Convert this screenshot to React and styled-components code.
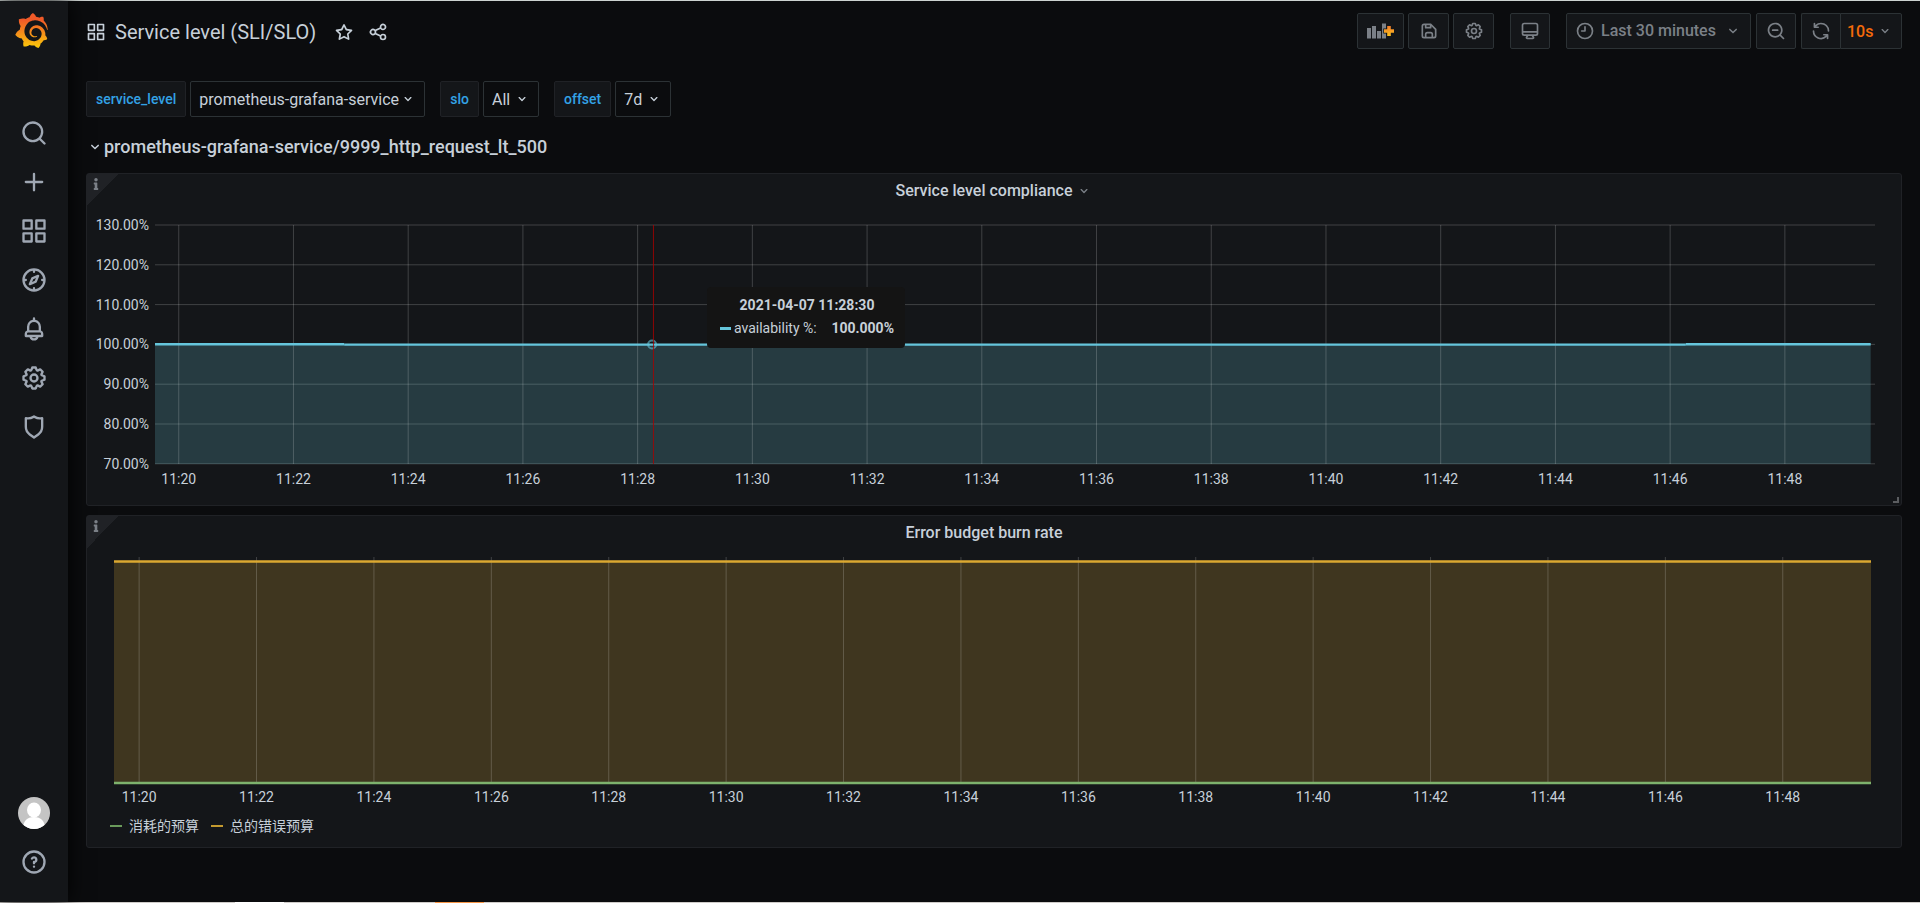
import React from 'react';
import styled, { createGlobalStyle, ThemeProvider } from 'styled-components';
import { SiGrafana } from 'react-icons/si';
import { FaInfo } from 'react-icons/fa';

const theme = {
  bg: '#0b0c0e',
  panel: '#141619',
  border: '#202226',
  controlBorder: '#2c3235',
  text: '#c7d0d9',
  textWeak: '#9fa7b3',
  icon: '#7b8087',
  blue: '#33a2e5',
  orange: '#f46a0a',
};

const GlobalStyle = createGlobalStyle`
  *, *::before, *::after {
    box-sizing: border-box;
  }
  body {
    margin: 0;
    background: ${theme.bg};
    color: ${theme.text};
    font-family: Roboto, 'Noto Sans CJK SC', sans-serif;
    font-size: 14px;
  }
  button, select {
    font: inherit;
    color: inherit;
    margin: 0;
  }
`;

const icons = {
  search:
    'M21.71,20.29,18,16.61A9,9,0,1,0,16.61,18l3.68,3.68a1,1,0,0,0,1.42,0A1,1,0,0,0,21.71,20.29ZM11,18a7,7,0,1,1,7-7A7,7,0,0,1,11,18Z',
  zoomOut:
    'M21.71,20.29,18,16.61A9,9,0,1,0,16.61,18l3.68,3.68a1,1,0,0,0,1.42,0A1,1,0,0,0,21.71,20.29ZM11,18a7,7,0,1,1,7-7A7,7,0,0,1,11,18ZM14,10H8a1,1,0,0,0,0,2h6a1,1,0,0,0,0-2Z',
  plus: 'M19,11H13V5a1,1,0,0,0-2,0v6H5a1,1,0,0,0,0,2h6v6a1,1,0,0,0,2,0V13h6a1,1,0,0,0,0-2Z',
  apps:
    'M10,13H3a1,1,0,0,0-1,1v7a1,1,0,0,0,1,1h7a1,1,0,0,0,1-1V14A1,1,0,0,0,10,13ZM9,20H4V15H9ZM21,2H14a1,1,0,0,0-1,1v7a1,1,0,0,0,1,1h7a1,1,0,0,0,1-1V3A1,1,0,0,0,21,2ZM20,9H15V4h5Zm1,4H14a1,1,0,0,0-1,1v7a1,1,0,0,0,1,1h7a1,1,0,0,0,1-1V14A1,1,0,0,0,21,13Zm-1,7H15V15h5ZM10,2H3A1,1,0,0,0,2,3v7a1,1,0,0,0,1,1h7a1,1,0,0,0,1-1V3A1,1,0,0,0,10,2ZM9,9H4V4H9Z',
  compass:
    'M12,2A10,10,0,1,0,22,12,10,10,0,0,0,12,2Zm1,17.93V19a1,1,0,0,0-2,0v.93A8,8,0,0,1,4.07,13H5a1,1,0,0,0,0-2H4.07A8,8,0,0,1,11,4.07V5a1,1,0,0,0,2,0V4.07A8,8,0,0,1,19.93,11H19a1,1,0,0,0,0,2h.93A8,8,0,0,1,13,19.93ZM15.14,7.55l-5,2.12a1,1,0,0,0-.52.52l-2.12,5a1,1,0,0,0,.21,1.1,1,1,0,0,0,.7.3.93.93,0,0,0,.4-.09l5-2.12a1,1,0,0,0,.52-.52l2.12-5a1,1,0,0,0-1.31-1.31Zm-2.49,5.1-2.28,1,1-2.28,2.28-1Z',
  bell:
    'M18,13.18V10a6,6,0,0,0-5-5.91V3a1,1,0,0,0-2,0V4.09A6,6,0,0,0,6,10v3.18A3,3,0,0,0,4,16v2a1,1,0,0,0,1,1H8.14a4,4,0,0,0,7.72,0H19a1,1,0,0,0,1-1V16A3,3,0,0,0,18,13.18ZM8,10a4,4,0,0,1,8,0v3H8Zm4,10a2,2,0,0,1-1.72-1h3.44A2,2,0,0,1,12,20Zm6-3H6V16a1,1,0,0,1,1-1H17a1,1,0,0,1,1,1Z',
  cog:
    'M21.32,9.55l-1.89-.63.89-1.78A1,1,0,0,0,20.13,6L18,3.87a1,1,0,0,0-1.15-.19l-1.78.89-.63-1.89A1,1,0,0,0,13.5,2h-3a1,1,0,0,0-.95.68L8.92,4.57,7.14,3.68A1,1,0,0,0,6,3.87L3.87,6a1,1,0,0,0-.19,1.15l.89,1.78-1.89.63A1,1,0,0,0,2,10.5v3a1,1,0,0,0,.68.95l1.89.63-.89,1.78A1,1,0,0,0,3.87,18L6,20.13a1,1,0,0,0,1.15.19l1.78-.89.63,1.89a1,1,0,0,0,.95.68h3a1,1,0,0,0,.95-.68l.63-1.89,1.78.89A1,1,0,0,0,18,20.13L20.13,18a1,1,0,0,0,.19-1.15l-.89-1.78,1.89-.63A1,1,0,0,0,22,13.5v-3A1,1,0,0,0,21.32,9.55ZM20,12.78l-1.2.4A2,2,0,0,0,17.64,16l.57,1.14-1.1,1.1L16,17.64a2,2,0,0,0-2.79,1.16l-.4,1.2H11.22l-.4-1.2A2,2,0,0,0,8,17.64l-1.14.57-1.1-1.1L6.36,16A2,2,0,0,0,5.2,13.18L4,12.78V11.22l1.2-.4A2,2,0,0,0,6.36,8L5.79,6.89l1.1-1.1L8,6.36A2,2,0,0,0,10.82,5.2l.4-1.2h1.56l.4,1.2A2,2,0,0,0,16,6.36l1.14-.57,1.1,1.1L17.64,8a2,2,0,0,0,1.16,2.79l1.2.4ZM12,8a4,4,0,1,0,4,4A4,4,0,0,0,12,8Zm0,6a2,2,0,1,1,2-2A2,2,0,0,1,12,14Z',
  shield:
    'M19.63,3.65a1,1,0,0,0-.84-.2,8,8,0,0,1-6.22-1.27,1,1,0,0,0-1.14,0A8,8,0,0,1,5.21,3.45a1,1,0,0,0-.84.2A1,1,0,0,0,4,4.43v7.45a9,9,0,0,0,3.77,7.33l3.65,2.6a1,1,0,0,0,1.16,0l3.65-2.6A9,9,0,0,0,20,11.88V4.43A1,1,0,0,0,19.63,3.65ZM18,11.88a7,7,0,0,1-2.93,5.7L12,19.77,8.93,17.58A7,7,0,0,1,6,11.88V5.58a10,10,0,0,0,6-1.39,10,10,0,0,0,6,1.39Z',
  help:
    'M11.29,15.29a1.58,1.58,0,0,0-.12.15.76.76,0,0,0-.09.18.64.64,0,0,0-.06.18,1.36,1.36,0,0,0,0,.2.84.84,0,0,0,.08.38.9.9,0,0,0,.54.54.94.94,0,0,0,.76,0,.9.9,0,0,0,.54-.54A1,1,0,0,0,13,16a1,1,0,0,0-.29-.71A1,1,0,0,0,11.29,15.29ZM12,2A10,10,0,1,0,22,12,10,10,0,0,0,12,2Zm0,18a8,8,0,1,1,8-8A8,8,0,0,1,12,20ZM12,7A3,3,0,0,0,9.4,8.5a1,1,0,1,0,1.73,1A1,1,0,0,1,12,9a1,1,0,0,1,0,2,1,1,0,0,0-1,1v1a1,1,0,0,0,2,0v-.18A3,3,0,0,0,12,7Z',
  star:
    'M22,9.67A1,1,0,0,0,21.14,9l-5.69-.83L12.9,3a1,1,0,0,0-1.8,0L8.55,8.16,2.86,9a1,1,0,0,0-.81.68,1,1,0,0,0,.25,1l4.13,4-1,5.68A1,1,0,0,0,6.9,21.44L12,18.77l5.1,2.67a.93.93,0,0,0,.46.12,1,1,0,0,0,.59-.19,1,1,0,0,0,.4-1l-1-5.68,4.13-4A1,1,0,0,0,22,9.67Zm-6.15,4a1,1,0,0,0-.29.88l.72,4.2-3.76-2a1.06,1.06,0,0,0-.94,0l-3.76,2,.72-4.2a1,1,0,0,0-.29-.88l-3-3,4.21-.61a1,1,0,0,0,.76-.55L12,5.7l1.88,3.82a1,1,0,0,0,.76.55l4.21.61Z',
  share:
    'M18,14a4,4,0,0,0-3.08,1.48l-5.1-2.35a3.64,3.64,0,0,0,0-2.26l5.1-2.35A4,4,0,1,0,14,6a4.17,4.17,0,0,0,.07.71L8.79,9.14a4,4,0,1,0,0,5.72l5.28,2.43A4.17,4.17,0,0,0,14,18a4,4,0,1,0,4-4ZM18,4a2,2,0,1,1-2,2A2,2,0,0,1,18,4ZM6,14a2,2,0,1,1,2-2A2,2,0,0,1,6,14Zm12,6a2,2,0,1,1,2-2A2,2,0,0,1,18,20Z',
  save:
    'M20.71,9.29l-6-6a1,1,0,0,0-.32-.21A1.09,1.09,0,0,0,14,3H6A3,3,0,0,0,3,6V18a3,3,0,0,0,3,3H18a3,3,0,0,0,3-3V10A1,1,0,0,0,20.71,9.29ZM9,5h4V7H9Zm6,14H9V16a1,1,0,0,1,1-1h4a1,1,0,0,1,1,1Zm4-1a1,1,0,0,1-1,1H17V16a3,3,0,0,0-3-3H10a3,3,0,0,0-3,3v3H6a1,1,0,0,1-1-1V6A1,1,0,0,1,6,5H7V8A1,1,0,0,0,8,9h6a1,1,0,0,0,1-1V6.41l4,4Z',
  monitor:
    'M19,2H5A3,3,0,0,0,2,5V15a3,3,0,0,0,3,3H7.64l-.58,1a2,2,0,0,0,0,2,2,2,0,0,0,1.75,1h6.46A2,2,0,0,0,17,21a2,2,0,0,0,0-2l-.59-1H19a3,3,0,0,0,3-3V5A3,3,0,0,0,19,2ZM8.77,20,10,18H14l1.2,2ZM20,15a1,1,0,0,1-1,1H5a1,1,0,0,1-1-1V14H20Zm0-3H4V5A1,1,0,0,1,5,4H19a1,1,0,0,1,1,1Z',
  clock:
    'M12,2A10,10,0,1,0,22,12,10,10,0,0,0,12,2Zm0,18a8,8,0,1,1,8-8A8,8,0,0,1,12,20ZM12,6a1,1,0,0,0-1,1v4H8a1,1,0,0,0,0,2h4a1,1,0,0,0,1-1V7A1,1,0,0,0,12,6Z',
  sync:
    'M19.91,15.51H15.38a1,1,0,0,0,0,2h2.4A8,8,0,0,1,4,12a1,1,0,1,0-2,0,10,10,0,0,0,16.88,7.23V21a1,1,0,0,0,2,0V16.5A1,1,0,0,0,19.91,15.51ZM12,2A10,10,0,0,0,5.12,4.77V3a1,1,0,0,0-2,0V7.5a1,1,0,0,0,1,1h4.5a1,1,0,0,0,0-2H6.22A8,8,0,0,1,20,12a1,1,0,0,0,2,0A10,10,0,0,0,12,2Z',
  angleDown:
    'M17,9.17a1,1,0,0,0-1.41,0L12,12.71,8.46,9.17a1,1,0,0,0-1.41,0,1,1,0,0,0,0,1.42l4.24,4.24a1,1,0,0,0,1.42,0L17,10.59A1,1,0,0,0,17,9.17Z',
};

const Svg = styled.svg`
  display: block;
  flex: none;
  fill: currentColor;
`;

const Icon = ({ name, size = 20, ...rest }) => (
  <Svg viewBox="0 0 24 24" width={size} height={size} aria-hidden="true" {...rest}>
    <path d={icons[name]} />
  </Svg>
);

const Page = styled.div`
  display: flex;
  min-height: calc(100vh - 1px);
  border-top: 1px solid #cdd3d1;
`;

const BottomStrip = styled.div`
  height: 1px;
  background: linear-gradient(
    90deg,
    #cfccc9 235px,
    #fff 235px 284px,
    #cfccc9 284px 435px,
    #f79646 435px 484px,
    #cfccc9 484px
  );
`;

const Sidebar = styled.nav`
  display: flex;
  flex-direction: column;
  align-items: center;
  flex: none;
  width: 68px;
  padding: 12px 0 16px;
  background: ${({ theme }) => theme.panel};
  box-shadow: 0 0 20px #000;
  color: ${({ theme }) => theme.textWeak};
`;

const LogoLink = styled.a`
  display: flex;
  margin: 0 5px 60px 0;
  svg {
    fill: url(#logo-gradient);
  }
`;

const SideLink = styled.a`
  display: flex;
  align-items: center;
  justify-content: center;
  width: 68px;
  height: 49px;
  color: inherit;
`;

const SideBottom = styled.div`
  margin-top: auto;
`;

const Main = styled.main`
  flex: 1;
  min-width: 0;
  padding: 0 18px 54px;
`;

const Toolbar = styled.header`
  display: flex;
  align-items: center;
  justify-content: space-between;
  padding: 12px 0;
`;

const TitleGroup = styled.div`
  display: flex;
  align-items: center;
  padding-top: 2px;
`;

const PageTitle = styled.h1`
  margin: 0 18px 0 9px;
  font-size: 20px;
  font-weight: 400;
  line-height: 24px;
`;

const IconButton = styled.button`
  display: flex;
  padding: 0;
  margin-right: 14px;
  border: 0;
  background: none;
`;

const Actions = styled.div`
  display: flex;
  gap: ${({ $gap }) => $gap || 4}px;
  color: ${({ theme }) => theme.icon};
`;

const ToolButton = styled.button`
  display: flex;
  align-items: center;
  justify-content: center;
  width: ${({ $width }) => $width}px;
  height: 36px;
  padding: 0 8px;
  border: 1px solid ${({ theme }) => theme.controlBorder};
  border-radius: 2px;
  background: ${({ theme }) => theme.panel};
  font-size: 16px;
  font-weight: 500;
`;

const TimeLabel = styled.span`
  flex: 1;
  padding: 0 0 2px 6px;
  text-align: left;
  white-space: nowrap;
`;

const ButtonPair = styled.div`
  display: flex;
  & > button {
    border-right: 0;
    border-radius: 2px 0 0 2px;
  }
`;

const SelectBox = styled.div`
  display: flex;
  position: relative;
  align-items: center;
`;

const Select = styled.select`
  appearance: none;
  width: ${({ $width }) => $width}px;
  height: 36px;
  padding: 0 ${({ $joined }) => ($joined ? 6 : 8)}px;
  border: 1px solid ${({ theme }) => theme.controlBorder};
  border-radius: ${({ $joined }) => ($joined ? '0 2px 2px 0' : '2px')};
  background: ${({ theme, $joined }) => ($joined ? theme.panel : theme.bg)};
  color: ${({ theme, $joined }) => ($joined ? theme.orange : theme.text)};
  font-size: 16px;
  font-weight: ${({ $joined }) => ($joined ? 500 : 400)};
`;

const SelectArrow = styled(Icon)`
  position: absolute;
  right: 9px;
  pointer-events: none;
`;

const Variables = styled.div`
  display: flex;
  gap: 15px;
  padding: 20px 0;
`;

const Variable = styled.div`
  display: flex;
  gap: 4px;
`;

const VariableLabel = styled.label`
  display: flex;
  align-items: center;
  height: 36px;
  padding: 0 9px;
  border: 1px solid ${({ theme }) => theme.border};
  border-radius: 2px;
  background: ${({ theme }) => theme.panel};
  color: ${({ theme }) => theme.blue};
  font-weight: 500;
`;

const RowTitle = styled.h2`
  display: flex;
  align-items: center;
  margin: 0;
  padding-bottom: 16px;
  font-size: 18px;
  font-weight: 500;
  line-height: 20px;
`;

const Panels = styled.div`
  display: grid;
  gap: 9px;
`;

const PanelBox = styled.section`
  position: relative;
  min-width: 0;
  height: 333px;
  border: 1px solid ${({ theme }) => theme.border};
  border-radius: 3px;
  background: ${({ theme }) => theme.panel};
`;

const InfoCorner = styled.span`
  position: absolute;
  top: 0;
  left: 0;
  width: 32px;
  height: 32px;
  padding: 3px;
  background: linear-gradient(135deg, ${({ theme }) => theme.border} 50%, transparent 50%);
  color: ${({ theme }) => theme.icon};
`;

const ResizeHandle = styled.span`
  position: absolute;
  right: 2px;
  bottom: 2px;
  width: 6px;
  height: 6px;
  border-right: 2px solid #5b5d60;
  border-bottom: 2px solid #5b5d60;
`;

const PanelTitle = styled.h3`
  display: flex;
  align-items: center;
  justify-content: center;
  margin: 0;
  padding: 6px 20px 0 0;
  font-size: 16px;
  font-weight: 500;
  line-height: 22px;
`;

const TitleArrow = styled(Icon)`
  margin: 0 -20px 0 4px;
  color: ${({ theme }) => theme.icon};
`;

const Plot = styled.div`
  position: relative;
  padding: ${({ $padding }) => $padding};
`;

const ChartSvg = styled.svg`
  display: block;
  width: 100%;
  height: ${({ $height }) => $height}px;
  overflow: visible;
  font-size: 14px;
  text {
    fill: ${({ theme }) => theme.text};
  }
`;

const Tooltip = styled.div`
  position: absolute;
  left: 620px;
  top: 85px;
  width: 198px;
  padding: 8px 11px 10px 13px;
  border-radius: 4px;
  background: #141414;
  line-height: 20px;
`;

const TooltipTime = styled.div`
  margin-bottom: 3px;
  font-weight: 700;
  text-align: center;
`;

const TooltipRow = styled.div`
  display: flex;
  align-items: center;
  b {
    margin-left: auto;
  }
`;

const Swatch = styled.i`
  width: ${({ $width }) => $width}px;
  height: ${({ $height }) => $height}px;
  margin-right: ${({ $gap }) => $gap}px;
  background: ${({ $color }) => $color};
`;

const Legend = styled.ul`
  display: flex;
  gap: 12px;
  margin: 33px 0 0 23px;
  padding: 0;
  list-style: none;
  line-height: 20px;
`;

const LegendItem = styled.li`
  display: flex;
  align-items: center;
`;

const times = Array.from({ length: 15 }, (_, i) => `11:${20 + i * 2}`);
const percents = [130, 120, 110, 100, 90, 80, 70];
const GRID = 'rgba(255, 255, 255, 0.19)';

const TimeGrid = ({ start, step, height, labelY }) =>
  times.map((time, i) => {
    const x = `${start + i * step}%`;
    return (
      <g key={time}>
        <line x1={x} x2={x} y1="0" y2={height} stroke={GRID} />
        <text x={x} y={labelY} textAnchor="middle">
          {time}
        </text>
      </g>
    );
  });

const ComplianceChart = () => (
  <Plot $padding="23px 26px 0 68px">
    <ChartSvg $height={239} role="img" aria-label="Availability over the last 30 minutes">
      {percents.map((value, i) => (
        <g key={value}>
          <line x1="0" x2="100%" y1={i * 39.8} y2={i * 39.8} stroke={GRID} />
          <text x="-6" y={i * 39.8 + 5} textAnchor="end">
            {value}.00%
          </text>
        </g>
      ))}
      <rect width="99.75%" y="119" height="120" fill="#6ed0e0" fillOpacity="0.2" />
      <TimeGrid start={1.38} step={6.67} height={239} labelY={259} />
      <line x1="0" x2="11%" y1="119.3" y2="119.3" stroke="#65c5db" strokeWidth="2.5" />
      <line x1="11%" x2="89%" y1="119.6" y2="119.6" stroke="#65c5db" strokeWidth="2.4" />
      <line x1="89%" x2="99.75%" y1="119.3" y2="119.3" stroke="#65c5db" strokeWidth="2.5" />
      <circle cx="28.9%" cy="119.5" r="4" fill="none" stroke="#65c5db" strokeOpacity="0.6" strokeWidth="2" />
      <line x1="28.98%" x2="28.98%" y1="0" y2="239" stroke="#aa0000" strokeOpacity="0.8" />
    </ChartSvg>
    <Tooltip>
      <TooltipTime>2021-04-07 11:28:30</TooltipTime>
      <TooltipRow>
        <Swatch $width={11} $height={3} $gap={3} $color="#65c5db" />
        availability %:
        <b>100.000%</b>
      </TooltipRow>
    </Tooltip>
  </Plot>
);

const BurnRateChart = () => (
  <Plot $padding="13px 30px 0 27px">
    <ChartSvg $height={226} role="img" aria-label="Error budget burn rate over the last 30 minutes">
      <rect width="100%" y="4" height="222" fill="#eab839" fillOpacity="0.2" />
      <TimeGrid start={1.43} step={6.682} height={226} labelY={245} />
      <line x1="0" x2="100%" y1="4.5" y2="4.5" stroke="#dba831" strokeWidth="2.6" />
      <line x1="0" x2="100%" y1="226" y2="226" stroke="#7eb26d" strokeWidth="2.4" />
    </ChartSvg>
  </Plot>
);

const Panel = ({ title, active, children }) => (
  <PanelBox>
    <InfoCorner>
      <FaInfo size={12} />
    </InfoCorner>
    <PanelTitle>
      {title}
      {active && <TitleArrow name="angleDown" size={16} />}
    </PanelTitle>
    {children}
    {active && <ResizeHandle />}
  </PanelBox>
);

const variables = [
  { name: 'service_level', value: 'prometheus-grafana-service', width: 235 },
  { name: 'slo', value: 'All', width: 56 },
  { name: 'offset', value: '7d', width: 56 },
];

const AddPanelIcon = () => (
  <Svg width="28" height="16" viewBox="0 0 28 16" aria-hidden="true">
    <defs>
      <linearGradient id="add-gradient" x1="0" x2="0" y1="0" y2="1">
        <stop offset="0" stopColor="#f37b2d" />
        <stop offset="1" stopColor="#fcc21b" />
      </linearGradient>
    </defs>
    <path d="M0 5h4v10.500H0zM5 3h4v12.500H5zM10 8h4v7.500h-4zM15 .5h4v15h-4z" />
    <path
      d="M20.200 3h3.600v3.200H27v3.600h-3.200V13h-3.600V9.800H17V6.200h3.200z"
      fill="url(#add-gradient)"
      stroke="#141619"
      strokeWidth="1.500"
      paintOrder="stroke"
    />
  </Svg>
);

const Avatar = () => (
  <Svg width="32" height="32" viewBox="0 0 32 32" aria-hidden="true">
    <clipPath id="avatar-clip">
      <circle cx="16" cy="16" r="16" />
    </clipPath>
    <g clipPath="url(#avatar-clip)">
      <rect width="32" height="32" fill="#c4c4c4" />
      <ellipse cx="16" cy="13" rx="7" ry="7.500" fill="#fff" />
      <path d="M5 32c0-8 4-12 11-12s11 4 11 12z" fill="#fff" />
    </g>
  </Svg>
);

const App = () => (
  <ThemeProvider theme={theme}>
    <GlobalStyle />
    <Page>
      <Sidebar>
        <LogoLink href="#home" aria-label="Home">
          <SiGrafana size={35} />
          <svg width="0" height="0">
            <linearGradient id="logo-gradient" x1="0" x2="0" y1="0" y2="1">
              <stop offset="0.2" stopColor="#f05a28" />
              <stop offset="1" stopColor="#fbca0a" />
            </linearGradient>
          </svg>
        </LogoLink>
        {['search', 'plus', 'apps', 'compass', 'bell', 'cog', 'shield'].map((name) => (
          <SideLink key={name} href={`#${name}`} aria-label={name}>
            <Icon name={name} size={28} />
          </SideLink>
        ))}
        <SideBottom>
          <SideLink href="#profile" aria-label="profile">
            <Avatar />
          </SideLink>
          <SideLink href="#help" aria-label="help">
            <Icon name="help" size={28} />
          </SideLink>
        </SideBottom>
      </Sidebar>
      <Main>
        <Toolbar>
          <TitleGroup>
            <Icon name="apps" />
            <PageTitle>Service level (SLI/SLO)</PageTitle>
            <IconButton aria-label="Mark as favorite">
              <Icon name="star" />
            </IconButton>
            <IconButton aria-label="Share dashboard">
              <Icon name="share" />
            </IconButton>
          </TitleGroup>
          <Actions $gap={16}>
            <Actions>
              <ToolButton $width={47} aria-label="Add panel">
                <AddPanelIcon />
              </ToolButton>
              <ToolButton $width={41} aria-label="Save dashboard">
                <Icon name="save" />
              </ToolButton>
              <ToolButton $width={41} aria-label="Dashboard settings">
                <Icon name="cog" />
              </ToolButton>
            </Actions>
            <ToolButton $width={40} aria-label="Cycle view mode">
              <Icon name="monitor" />
            </ToolButton>
            <Actions $gap={5}>
              <ToolButton $width={185}>
                <Icon name="clock" />
                <TimeLabel>Last 30 minutes</TimeLabel>
                <Icon name="angleDown" size={18} />
              </ToolButton>
              <ToolButton $width={40} aria-label="Zoom out">
                <Icon name="zoomOut" />
              </ToolButton>
              <ButtonPair>
                <ToolButton $width={39} aria-label="Refresh">
                  <Icon name="sync" />
                </ToolButton>
                <SelectBox>
                  <Select $width={62} $joined aria-label="Refresh interval" defaultValue="10s">
                    <option>5s</option>
                    <option>10s</option>
                    <option>30s</option>
                  </Select>
                  <SelectArrow name="angleDown" size={16} />
                </SelectBox>
              </ButtonPair>
            </Actions>
          </Actions>
        </Toolbar>
        <Variables>
          {variables.map(({ name, value, width }) => (
            <Variable key={name}>
              <VariableLabel htmlFor={name}>{name}</VariableLabel>
              <SelectBox>
                <Select id={name} $width={width}>
                  <option>{value}</option>
                </Select>
                <SelectArrow name="angleDown" size={16} />
              </SelectBox>
            </Variable>
          ))}
        </Variables>
        <RowTitle>
          <Icon name="angleDown" size={18} />
          prometheus-grafana-service/9999_http_request_lt_500
        </RowTitle>
        <Panels>
          <Panel title="Service level compliance" active>
            <ComplianceChart />
          </Panel>
          <Panel title="Error budget burn rate">
            <BurnRateChart />
            <Legend>
              <LegendItem>
                <Swatch $width={12} $height={2} $gap={7} $color="#6a9a5b" />
                消耗的预算
              </LegendItem>
              <LegendItem>
                <Swatch $width={12} $height={2} $gap={7} $color="#c49a2f" />
                总的错误预算
              </LegendItem>
            </Legend>
          </Panel>
        </Panels>
      </Main>
    </Page>
    <BottomStrip />
  </ThemeProvider>
);

export default App;
